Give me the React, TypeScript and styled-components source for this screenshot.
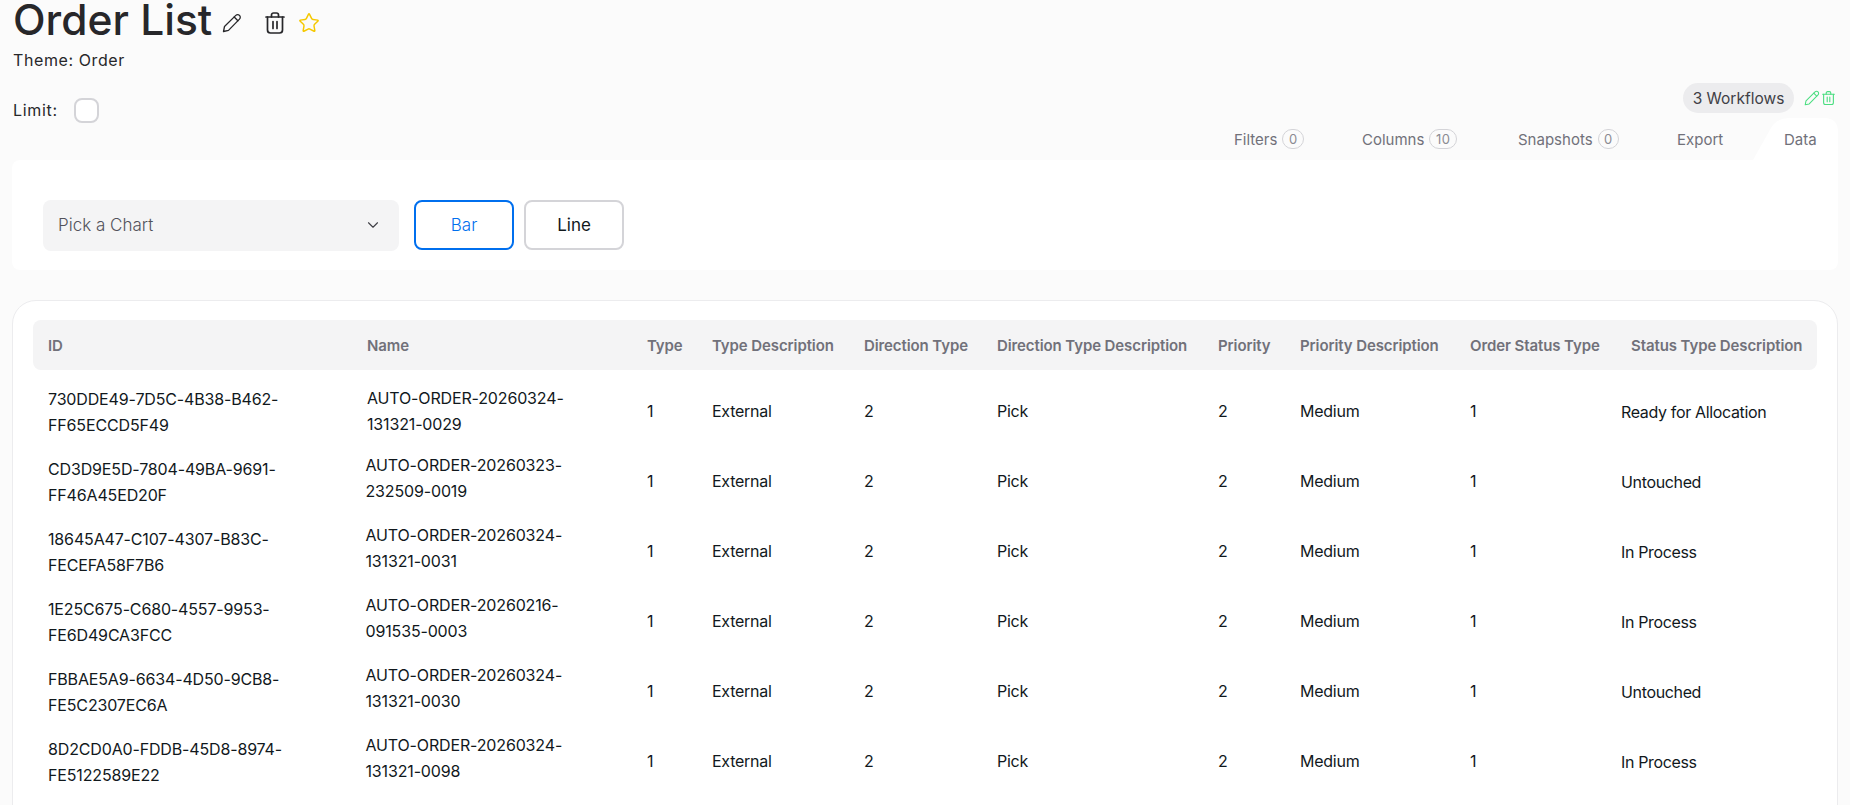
import React from "react";
import styled, { createGlobalStyle } from "styled-components";
import { ChevronDown, Star } from "lucide-react";

const GlobalStyle = createGlobalStyle`
  html, body {
    margin: 0;
    height: 805px;
    overflow: hidden;
    background: #fbfbfb;
    font-family: "Inter", "Liberation Sans", sans-serif;
  }
`;

const Page = styled.div`
  height: 805px;
  overflow: hidden;
  padding: 0 12px;
  box-sizing: border-box;
`;

const TitleRow = styled.div`
  display: flex;
  align-items: center;
  height: 40px;
  padding-left: 1px;
`;

const Title = styled.h1`
  margin: 0;
  font-size: 42.5px;
  line-height: 40px;
  font-weight: 500;
  color: #27272a;
  white-space: nowrap;
`;

const TitleIcons = styled.div`
  display: flex;
  align-items: center;
  margin: 6px 0 0 10px;
  color: #27272a;

  & > svg:nth-child(2) {
    margin: 0 13px 0 23px;
  }
`;

const Theme = styled.div`
  margin: 10px 0 0 1px;
  font-size: 16px;
  line-height: 20px;
  letter-spacing: 0.6px;
  color: #27272a;
`;

const TopBar = styled.div`
  display: flex;
  justify-content: space-between;
  align-items: flex-start;
  height: 48px;
`;

const LimitGroup = styled.div`
  display: flex;
  align-items: center;
  gap: 16px;
  margin: 27px 0 0 1px;
  font-size: 16px;
  letter-spacing: 0.7px;
  color: #27272a;
`;

const Checkbox = styled.span`
  width: 21px;
  height: 21px;
  margin-top: 1px;
  border: 2px solid #d4d4d8;
  border-radius: 8px;
  background: #fff;
`;

const WorkflowGroup = styled.div`
  display: flex;
  align-items: center;
  gap: 10px;
  margin: 13px 3px 0 0;
`;

const WorkflowChip = styled.span`
  display: flex;
  align-items: center;
  justify-content: center;
  width: 111px;
  height: 30px;
  border-radius: 15px;
  background: #ececee;
  font-size: 15.5px;
  color: #3f3f46;
`;

const GreenIcons = styled.div`
  display: flex;
  align-items: center;
  gap: 2px;
  color: #4ade80;
`;

const TabBar = styled.div`
  display: flex;
  justify-content: flex-end;
  height: 42px;
`;

const Tab = styled.div<{ $width: number }>`
  display: flex;
  align-items: center;
  gap: 5px;
  width: ${(p) => p.$width}px;
  font-size: 15px;
  color: #71717a;
`;

const DataTab = styled(Tab)`
  position: relative;
  padding-left: 31px;
  box-sizing: border-box;

  & > span {
    position: relative;
  }

  &::before {
    content: "";
    position: absolute;
    inset: 0;
    background: #fff;
    clip-path: path("M0 42 L18 10 Q24 0 36 0 L71 0 Q85 0 85 14 L85 42 Z");
  }
`;

const TabCount = styled.span`
  display: inline-flex;
  align-items: center;
  justify-content: center;
  min-width: 20px;
  height: 20px;
  padding: 0 5.5px;
  box-sizing: border-box;
  border: 1px solid #d4d4d8;
  border-radius: 10px;
  font-size: 13px;
  letter-spacing: 0.5px;
  color: #8b8b92;
`;

const ChartPanel = styled.section`
  display: flex;
  align-items: center;
  gap: 10px;
  height: 110px;
  padding: 20px 31px 0 31px;
  box-sizing: border-box;
  background: #fff;
  border-radius: 8px 0 8px 8px;
`;

const ChartSelect = styled.div`
  display: flex;
  align-items: center;
  justify-content: space-between;
  width: 356px;
  height: 51px;
  margin-right: 5px;
  padding: 0 17px 0 15px;
  box-sizing: border-box;
  background: #f4f4f5;
  border-radius: 8px;
  font-size: 17px;
  font-weight: 300;
  color: #52525b;
`;

const ChartButton = styled.button<{ $active?: boolean }>`
  width: 100px;
  height: 50px;
  background: #fff;
  border: 2px solid ${(p) => (p.$active ? "#006fee" : "#d4d4d8")};
  border-radius: 8px;
  font-family: inherit;
  font-size: 17px;
  font-weight: ${(p) => (p.$active ? 300 : 400)};
  color: ${(p) => (p.$active ? "#006fee" : "#11181c")};
`;

const TableCard = styled.section`
  margin-top: 30px;
  height: 600px;
  padding: 19px 20px 0 20px;
  background: #fff;
  border: 1px solid #ececee;
  border-radius: 24px;
  box-sizing: border-box;
`;

const columns = "319px 280px 65px 152px 133px 221px 82px 170px 151px 1fr";

const HeaderRow = styled.div`
  display: grid;
  grid-template-columns: ${columns};
  align-items: center;
  height: 50px;
  margin-bottom: 7px;
  background: #f4f4f5;
  border-radius: 8px;
`;

const HeaderCell = styled.div<{ $indent?: number }>`
  padding-left: ${(p) => 15 + (p.$indent ?? 0)}px;
  font-size: 15px;
  font-weight: 600;
  letter-spacing: -0.1px;
  color: #71717a;
  white-space: nowrap;
`;

const Row = styled.div`
  display: grid;
  grid-template-columns: ${columns};
  align-items: center;
  height: 70px;
`;

const Cell = styled.div`
  padding-left: 15px;
  font-size: 16px;
  line-height: 25.6px;
  letter-spacing: -0.25px;
  color: #11181c;
`;

const IdCell = styled(Cell)`
  margin-top: 2px;
  letter-spacing: -0.15px;
`;

const NameCell = styled(Cell)<{ $first: boolean }>`
  margin-top: ${(p) => (p.$first ? 0 : -6)}px;
  padding-left: ${(p) => (p.$first ? 15 : 13.5)}px;
  letter-spacing: -0.15px;
`;

const StatusCell = styled(Cell)`
  margin-top: 2px;
  letter-spacing: -0.35px;
`;

const PencilIcon = ({ size }: { size: number }) => (
  <svg width={size} height={size} viewBox="0 0 20 20" fill="none" stroke="currentColor" strokeWidth={1.3} strokeLinejoin="round" strokeLinecap="round">
    <path d="M1.5 18.5 L2.5 13.5 L13.8 2.4 a2.5 2.5 0 0 1 3.7 3.7 L6.5 17.4 Z" />
    <path d="M12.2 4 L15.9 7.7" />
  </svg>
);

const TrashIcon = ({ width }: { width: number }) => (
  <svg width={width} height={(width * 22) / 20} viewBox="0 0 20 22" fill="none" stroke="currentColor" strokeWidth={1.7} strokeLinecap="round">
    <path d="M1 5h18" />
    <path d="M6.5 5V3a2 2 0 0 1 2-2h3a2 2 0 0 1 2 2v2" />
    <path d="M2.5 5v13a3 3 0 0 0 3 3h9a3 3 0 0 0 3-3V5" />
    <path d="M8 9.5v7M12 9.5v7" />
  </svg>
);

const headers = [
  "ID",
  "Name",
  "Type",
  "Type Description",
  "Direction Type",
  "Direction Type Description",
  "Priority",
  "Priority Description",
  "Order Status Type",
];

const orders = [
  { id: ["730DDE49-7D5C-4B38-B462-", "FF65ECCD5F49"], name: ["AUTO-ORDER-20260324-", "131321-0029"], status: "Ready for Allocation" },
  { id: ["CD3D9E5D-7804-49BA-9691-", "FF46A45ED20F"], name: ["AUTO-ORDER-20260323-", "232509-0019"], status: "Untouched" },
  { id: ["18645A47-C107-4307-B83C-", "FECEFA58F7B6"], name: ["AUTO-ORDER-20260324-", "131321-0031"], status: "In Process" },
  { id: ["1E25C675-C680-4557-9953-", "FE6D49CA3FCC"], name: ["AUTO-ORDER-20260216-", "091535-0003"], status: "In Process" },
  { id: ["FBBAE5A9-6634-4D50-9CB8-", "FE5C2307EC6A"], name: ["AUTO-ORDER-20260324-", "131321-0030"], status: "Untouched" },
  { id: ["8D2CD0A0-FDDB-45D8-8974-", "FE5122589E22"], name: ["AUTO-ORDER-20260324-", "131321-0098"], status: "In Process" },
];

const tabs = [
  { label: "Filters", count: 0, width: 128 },
  { label: "Columns", count: 10, width: 156 },
  { label: "Snapshots", count: 0, width: 159 },
  { label: "Export", width: 76 },
];

const App = () => {
  return (
    <Page>
      <GlobalStyle />
      <TitleRow>
        <Title>Order List</Title>
        <TitleIcons>
          <PencilIcon size={20} />
          <TrashIcon width={20} />
          <Star size={22} strokeWidth={1.6} color="#f5c800" />
        </TitleIcons>
      </TitleRow>
      <Theme>Theme: Order</Theme>
      <TopBar>
        <LimitGroup>
          Limit:
          <Checkbox />
        </LimitGroup>
        <WorkflowGroup>
          <WorkflowChip>3 Workflows</WorkflowChip>
          <GreenIcons>
            <PencilIcon size={16} />
            <TrashIcon width={13} />
          </GreenIcons>
        </WorkflowGroup>
      </TopBar>
      <TabBar>
        {tabs.map(({ label, count, width }) => (
          <Tab key={label} $width={width}>
            {label}
            {count !== undefined && <TabCount>{count}</TabCount>}
          </Tab>
        ))}
        <DataTab $width={85}>
          <span>Data</span>
        </DataTab>
      </TabBar>
      <ChartPanel>
        <ChartSelect>
          Pick a Chart
          <ChevronDown size={18} strokeWidth={1.5} color="#3f3f46" />
        </ChartSelect>
        <ChartButton $active>Bar</ChartButton>
        <ChartButton>Line</ChartButton>
      </ChartPanel>
      <TableCard>
        <HeaderRow>
          {headers.map((h) => (
            <HeaderCell key={h}>{h}</HeaderCell>
          ))}
          <HeaderCell $indent={10}>Status Type Description</HeaderCell>
        </HeaderRow>
        {orders.map(({ id, name, status }, i) => (
          <Row key={id[0]}>
            <IdCell>
              {id[0]}
              <br />
              {id[1]}
            </IdCell>
            <NameCell $first={i === 0}>
              {name[0]}
              <br />
              {name[1]}
            </NameCell>
            <Cell>1</Cell>
            <Cell>External</Cell>
            <Cell>2</Cell>
            <Cell>Pick</Cell>
            <Cell>2</Cell>
            <Cell>Medium</Cell>
            <Cell>1</Cell>
            <StatusCell>{status}</StatusCell>
          </Row>
        ))}
      </TableCard>
    </Page>
  );
};

export default App;
